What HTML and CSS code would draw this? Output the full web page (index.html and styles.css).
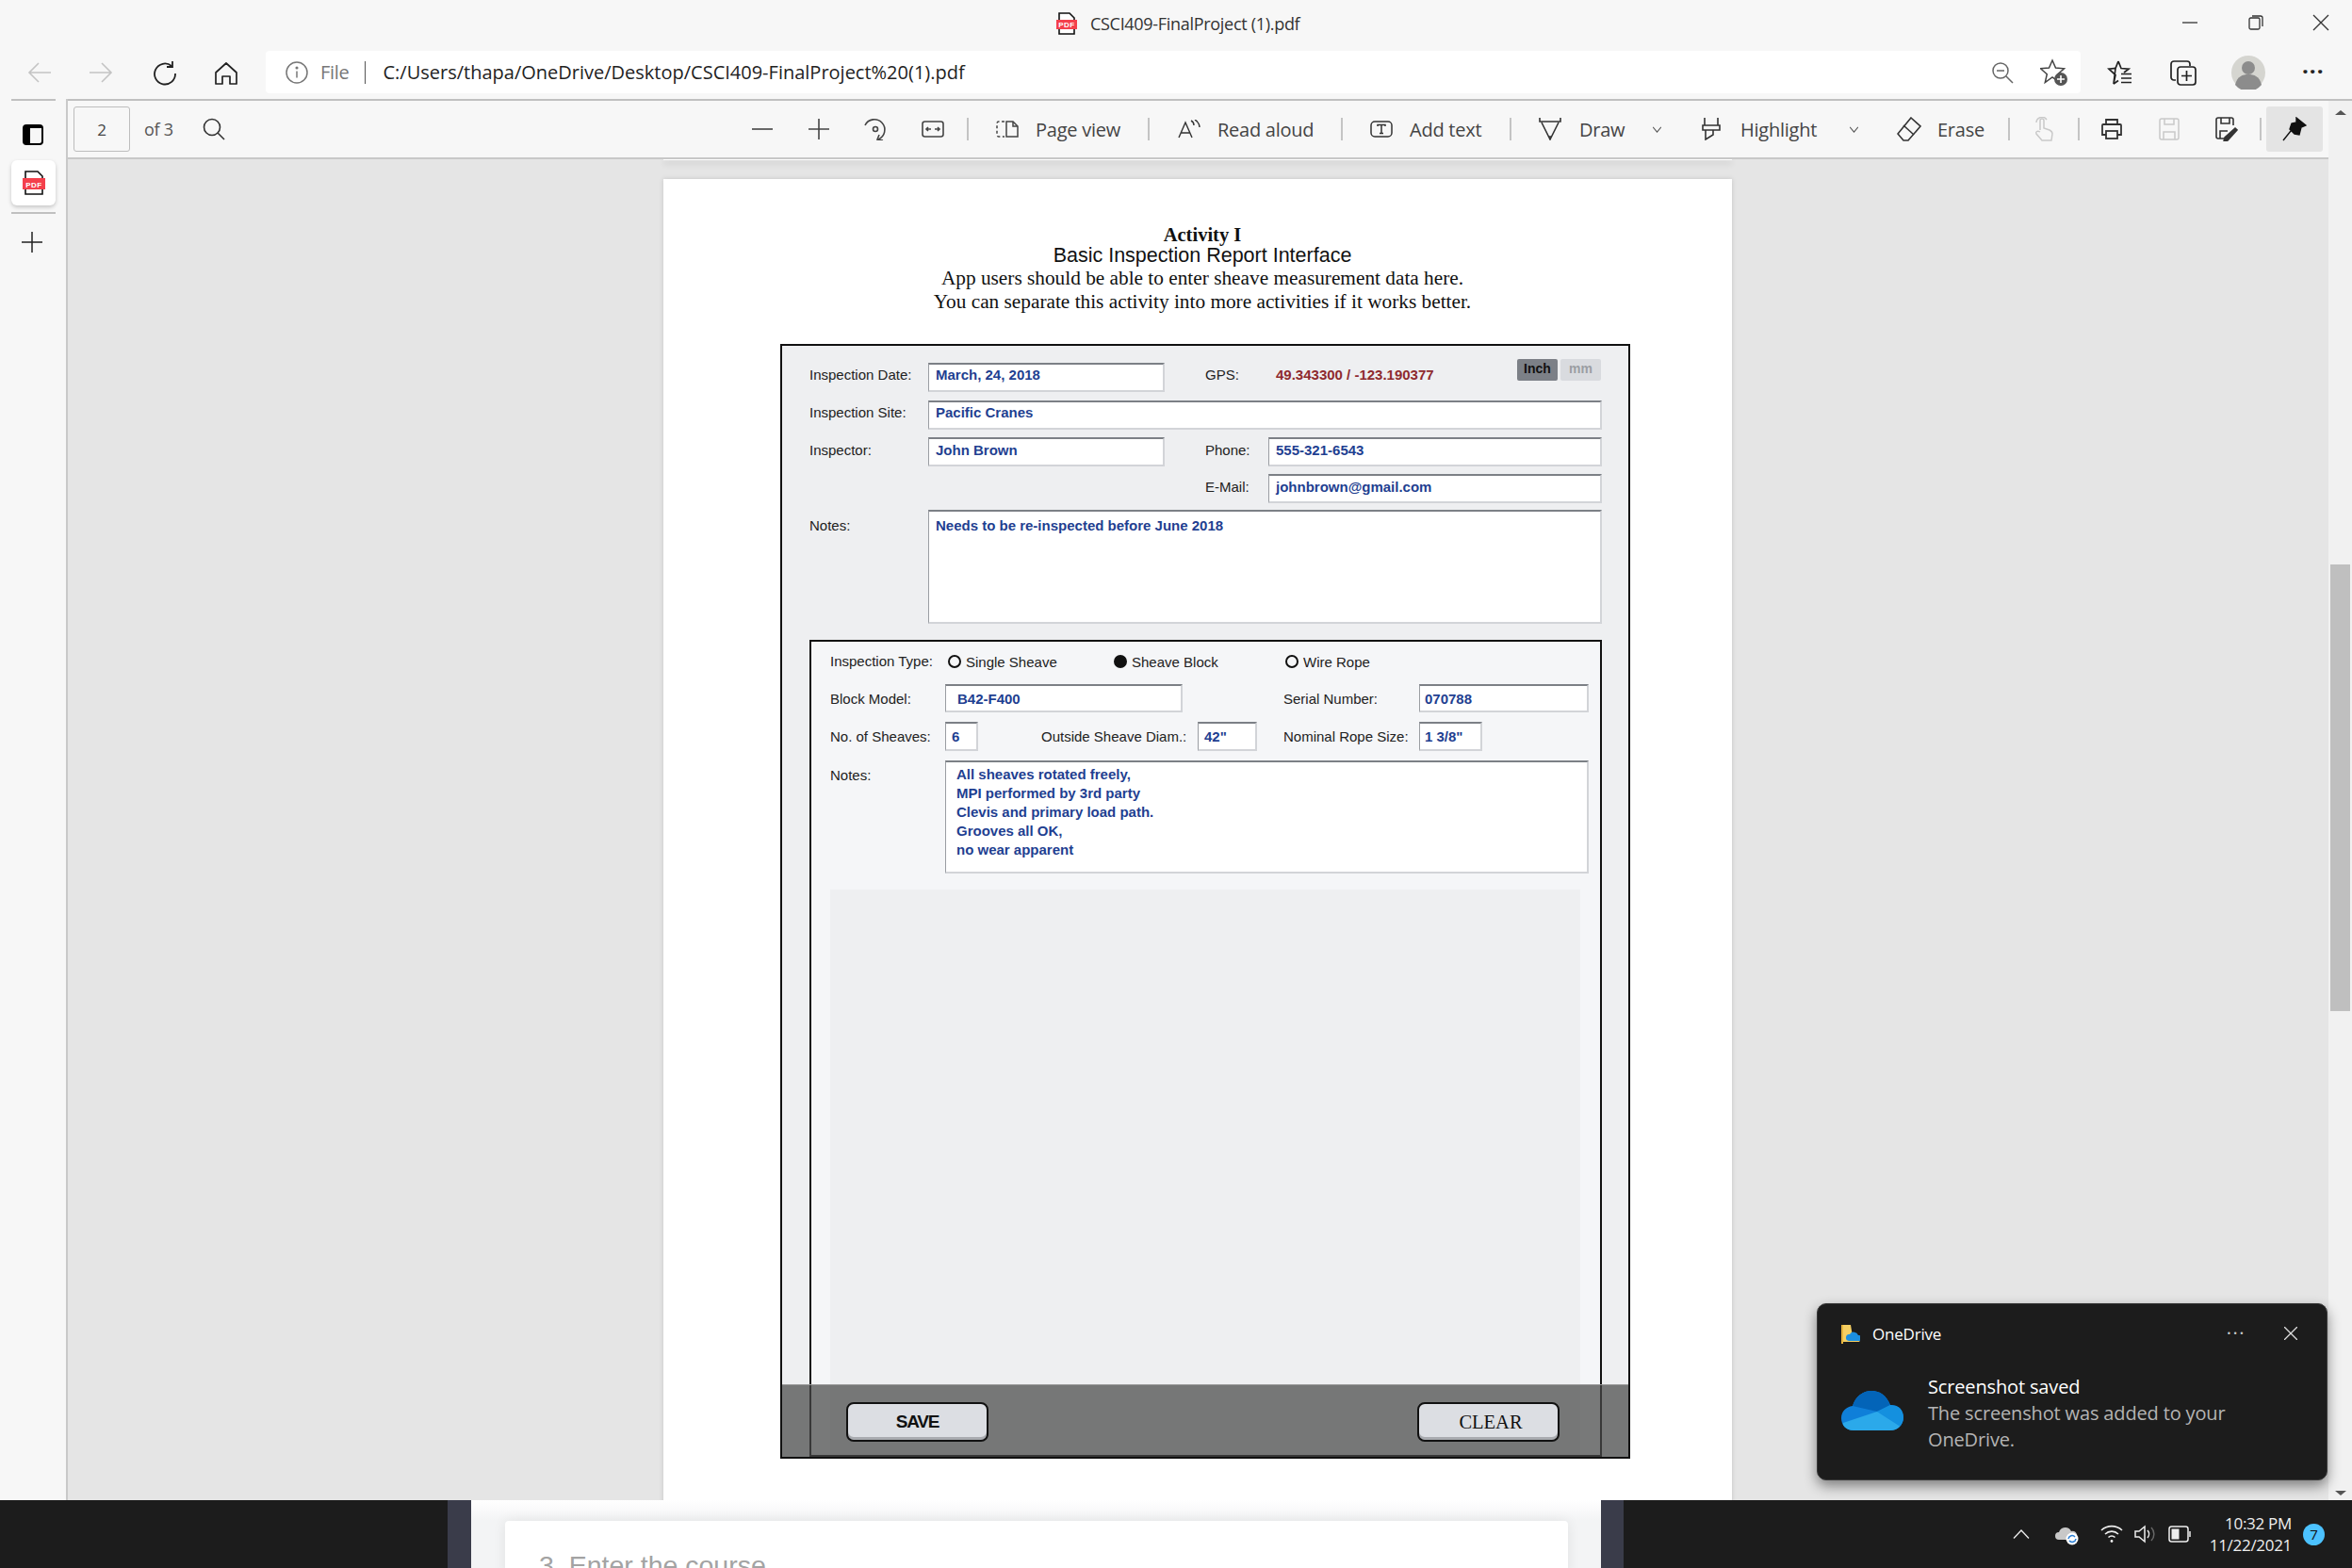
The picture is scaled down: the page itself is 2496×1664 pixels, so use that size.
FILE: index.html
```html
<!DOCTYPE html>
<html lang="en">
  <head>
    <meta charset="UTF-8" />
    <title>CSCI409-FinalProject (1).pdf</title>
    <link rel="stylesheet" href="styles.css">
  </head>
  <body>
    <!-- window title -->
    <div class="titlebar">
      <svg class="title-icon" width="24" height="24" viewBox="0 0 24 24">
        <path d="M4 1h11l5 5v17H4z" fill="#fff" stroke="#111" stroke-width="1.6"/>
        <rect x="1" y="8" width="22" height="10" fill="#f4404c"/>
        <text x="12" y="16" text-anchor="middle" class="pdf-mark">PDF</text>
      </svg>
      <span class="title-text">CSCI409-FinalProject (1).pdf</span>
      <div class="win-controls">
        <svg width="18" height="18" viewBox="0 0 18 18"><path d="M1 9h16" stroke="#333" stroke-width="1.3"/></svg>
        <svg width="18" height="18" viewBox="0 0 18 18" fill="none" stroke="#333" stroke-width="1.3"><rect x="2" y="4" width="11" height="12" rx="1.5"/><path d="M5 2h9a2 2 0 0 1 2 2v9"/></svg>
        <svg width="18" height="18" viewBox="0 0 18 18"><path d="M1 1l16 16M17 1L1 17" stroke="#333" stroke-width="1.3"/></svg>
      </div>
    </div>

    <!-- navigation row -->
    <div class="navbar">
      <svg class="nav-btn" width="26" height="24" viewBox="0 0 26 24" fill="none" stroke="#c4c4c4" stroke-width="1.6"><path d="M25 12H2M12 2L2 12l10 10"/></svg>
      <svg class="nav-btn" width="26" height="24" viewBox="0 0 26 24" fill="none" stroke="#c4c4c4" stroke-width="1.6"><path d="M1 12h23M14 2l10 10-10 10"/></svg>
      <svg class="nav-btn" width="26" height="26" viewBox="0 0 26 26" fill="none" stroke="#222" stroke-width="1.8"><path d="M20 5a11 11 0 1 0 4 8"/><path d="M21 0v6h-6"/></svg>
      <svg class="nav-btn" width="26" height="26" viewBox="0 0 26 26" fill="none" stroke="#222" stroke-width="1.7"><path d="M13 2l11 10v12h-7v-8H9v8H2V12z" stroke-linejoin="round"/></svg>
      <div class="address">
        <svg width="24" height="24" viewBox="0 0 24 24" fill="none" stroke="#777" stroke-width="1.5"><circle cx="12" cy="12" r="11"/><path d="M12 10.500v7"/><circle cx="12" cy="7" r=".8" fill="#777"/></svg>
        <span class="addr-file">File</span>
        <span class="addr-sep"></span>
        <span class="addr-url">C:/Users/thapa/OneDrive/Desktop/CSCI409-FinalProject%20(1).pdf</span>
        <div class="addr-right">
          <svg width="24" height="24" viewBox="0 0 24 24" fill="none" stroke="#666" stroke-width="1.5"><circle cx="10" cy="10" r="8"/><path d="M6 10h8M16 16l7 7"/></svg>
          <svg width="30" height="30" viewBox="0 0 30 30"><path d="M13 2l3.500 8 9 .8-6.800 5.900 2 8.800L13 20l-7.700 5.500 2-8.800L.5 10.800l9-.8z" fill="none" stroke="#444" stroke-width="1.5"/><circle cx="22" cy="22" r="7" fill="#555"/><path d="M22 18v8M18 22h8" stroke="#fff" stroke-width="1.6"/></svg>
        </div>
      </div>
      <svg class="nav-fav" width="28" height="28" viewBox="0 0 28 28" fill="none" stroke="#222" stroke-width="1.7"><path d="M12 2l3 7.500 8 .7-5 3.800M7 26l2-9.500-7-6.300 7-.7z"/><path d="M12 2L9 9.500"/><path d="M7 26l5-3.500M15 15.500h11M15 20h11M15 24.500h11"/></svg>
      <svg class="nav-coll" width="28" height="28" viewBox="0 0 28 28" fill="none" stroke="#222" stroke-width="1.7"><path d="M6 22H4a3 3 0 0 1-3-3V5a3 3 0 0 1 3-3h14a3 3 0 0 1 3 3v2"/><rect x="8" y="8" width="19" height="19" rx="3"/><path d="M17.500 12v11M12 17.500h11"/></svg>
      <svg class="nav-avatar" width="36" height="36" viewBox="0 0 36 36"><circle cx="18" cy="18" r="18" fill="#d5d5d0"/><circle cx="18" cy="13" r="7" fill="#8c8c8c"/><path d="M4 31c2-9 8-11 14-11s12 2 14 11a18 18 0 0 1-28 0z" fill="#8c8c8c"/></svg>
      <span class="nav-more">&middot;&middot;&middot;</span>
    </div>

    <div class="content">
      <!-- vertical tabs -->
      <aside class="sidebar">
        <div class="side-line"></div>
        <svg class="side-panel" width="22" height="22" viewBox="0 0 22 22"><rect x="1" y="1" width="20" height="20" rx="3" fill="none" stroke="#000" stroke-width="2"/><rect x="1" y="1" width="7" height="20" fill="#000"/><rect x="1" y="1" width="20" height="3" fill="#000"/></svg>
        <div class="side-tab">
          <svg width="24" height="26" viewBox="0 0 24 26">
            <path d="M3 1h13l5 5v19H3z" fill="#fff" stroke="#111" stroke-width="1.6"/>
            <rect x="0" y="8" width="24" height="12" fill="#f4404c"/>
            <text x="12" y="17.500" text-anchor="middle" class="pdf-mark">PDF</text>
          </svg>
        </div>
        <div class="side-line side-line-low"></div>
        <svg class="side-plus" width="22" height="22" viewBox="0 0 22 22"><path d="M11 0v22M0 11h22" stroke="#222" stroke-width="1.5"/></svg>
      </aside>

      <div class="workspace">
        <div class="workspace-main">
          <!-- pdf toolbar -->
          <div class="toolbar">
            <div class="page-num">2</div>
            <span class="tool-of">of 3</span>
            <svg width="24" height="24" viewBox="0 0 24 24" fill="none" stroke="#333" stroke-width="1.6"><circle cx="10" cy="10" r="8.500"/><path d="M16 16l7 7"/></svg>

            <svg width="22" height="22" viewBox="0 0 22 22"><path d="M0 11h22" stroke="#444" stroke-width="1.6"/></svg>
            <svg width="22" height="22" viewBox="0 0 22 22"><path d="M11 0v22M0 11h22" stroke="#444" stroke-width="1.6"/></svg>
            <svg width="24" height="24" viewBox="0 0 24 24" fill="none" stroke="#444" stroke-width="1.6"><path d="M1 8a11 11 0 1 1 14 15"/><circle cx="12" cy="12" r="2.500"/><path d="M16 18l-2 5 6 1"/></svg>
            <svg width="24" height="18" viewBox="0 0 24 18" fill="none" stroke="#444" stroke-width="1.6"><rect x="1" y="1" width="22" height="16" rx="2.500"/><path d="M10 9H5M7 7L5 9l2 2M14 9h5M17 7l2 2-2 2"/></svg>
            <span class="tool-sep"></span>
            <svg width="24" height="18" viewBox="0 0 24 18" fill="none" stroke="#444" stroke-width="1.5"><path d="M9 1H3a2 2 0 0 0-2 2v12a2 2 0 0 0 2 2h6" stroke-dasharray="3 2.500"/><path d="M11 1h7l5 5v11H11z"/><path d="M18 1v5h5"/></svg>
            <span class="tool-text">Page view</span>
            <span class="tool-sep"></span>
            <svg width="24" height="20" viewBox="0 0 24 20" fill="none" stroke="#333" stroke-width="1.4"><path d="M1 19L8 3l7 16M3.500 14h9"/><path d="M14 1c2 1 3 3 3 5M18 0c3 2 5 4 5 8"/></svg>
            <span class="tool-text">Read aloud</span>
            <span class="tool-sep"></span>
            <svg width="24" height="18" viewBox="0 0 24 18" fill="none" stroke="#333" stroke-width="1.5"><rect x="1" y="1" width="22" height="16" rx="4"/><path d="M8 6V4.500h8V6M12 4.500V13.500M10 13.500h4"/></svg>
            <span class="tool-text">Add text</span>
            <span class="tool-sep"></span>
            <svg width="24" height="24" viewBox="0 0 24 24" fill="none" stroke="#333" stroke-width="1.6"><path d="M1 0v4h22V0M3 5l7.500 15h3L21 5M10.500 20l1.500 3 1.500-3"/></svg>
            <span class="tool-text">Draw</span>
            <svg width="9" height="7" viewBox="0 0 10 8" fill="none" stroke="#555" stroke-width="1.2"><path d="M0 1l5 6 5-6"/></svg>
            <svg width="24" height="24" viewBox="0 0 24 24" fill="none" stroke="#333" stroke-width="1.6"><path d="M5 0v8h14V0M3 8h18v5H3zM6 13v10l8-5v-5"/></svg>
            <span class="tool-text tool-text-hl">Highlight</span>
            <svg width="9" height="7" viewBox="0 0 10 8" fill="none" stroke="#555" stroke-width="1.2"><path d="M0 1l5 6 5-6"/></svg>
            <svg width="26" height="26" viewBox="0 0 26 26" fill="none" stroke="#333" stroke-width="1.6"><path d="M15 1l10 9-13 15H7l-6-7z"/><path d="M7 9l11 10"/></svg>
            <span class="tool-text tool-text-hl">Erase</span>
            <span class="tool-sep"></span>
            <svg width="20" height="26" viewBox="0 0 20 26" fill="none" stroke="#c9c9c9" stroke-width="1.5"><path d="M6 14V4a2 2 0 0 1 4 0v8l6 2c2 1 3 2 3 4l-1 7H8l-6-7c-1-2 1-4 4-2"/><path d="M2 6a6 6 0 0 1 11-3"/></svg>
            <span class="tool-sep"></span>
            <svg width="24" height="24" viewBox="0 0 24 24" fill="none" stroke="#333" stroke-width="1.8"><path d="M6 7V2h12v5M6 18H2V8a1 1 0 0 1 1-1h18a1 1 0 0 1 1 1v10h-4"/><rect x="6" y="14" width="12" height="8"/></svg>
            <svg width="22" height="24" viewBox="0 0 22 24" fill="none" stroke="#c9c9c9" stroke-width="1.5"><rect x="1" y="1" width="20" height="22" rx="2"/><path d="M6 1v6h10V1M5 23v-8h12v8"/></svg>
            <svg width="24" height="26" viewBox="0 0 24 26" fill="none" stroke="#333" stroke-width="1.6"><path d="M9 23H3a2 2 0 0 1-2-2V3a2 2 0 0 1 2-2h14a2 2 0 0 1 2 2v6"/><path d="M6 1v6h9V1M5 23v-8h8"/><path d="M21 12l2 2-10 11-4 1 1-4z" fill="#333"/></svg>
            <span class="tool-sep"></span>
            <div class="pin-btn">
              <svg width="26" height="26" viewBox="0 0 26 26"><path d="M15 1l10 8-5 2-2 8-5-1-5-5 2-6 5-1zM9 15l-8 10" fill="#111" stroke="#111" stroke-width="1.4"/></svg>
            </div>
          </div>

          <!-- document area -->
          <div class="viewer">
            <div class="prev-page"></div>
            <div class="pdf-page">
              <div class="doc-head">
                <div class="head-activity">Activity I</div>
                <div class="head-title">Basic Inspection Report Interface</div>
                <div class="head-line head-line-a">App users should be able to enter sheave measurement data here.</div>
                <div class="head-line">You can separate this activity into more activities if it works better.</div>
              </div>

              <div class="report">
                <div class="report-grid">
                  <label class="lbl">Inspection Date:</label>
                  <div class="field field-high">March, 24, 2018</div>
                  <label class="lbl lbl-c3">GPS:</label>
                  <div class="gps-cell">
                    <span class="gps-val">49.343300 / -123.190377</span>
                    <div class="unit-toggle">
                      <span class="unit unit-on">Inch</span>
                      <span class="unit">mm</span>
                    </div>
                  </div>

                  <label class="lbl">Inspection Site:</label>
                  <div class="field field-wide field-high">Pacific Cranes</div>

                  <label class="lbl lbl-low">Inspector:</label>
                  <div class="field">John Brown</div>
                  <label class="lbl lbl-c3 lbl-low">Phone:</label>
                  <div class="field">555-321-6543</div>

                  <label class="lbl lbl-c3 lbl-low">E-Mail:</label>
                  <div class="field">johnbrown@gmail.com</div>

                  <label class="lbl lbl-notes">Notes:</label>
                  <div class="field field-wide field-notes">Needs to be re-inspected before June 2018</div>
                </div>

                <div class="sheave-box">
                  <div class="type-row">
                    <span class="lbl">Inspection Type:</span>
                    <span class="radio-opt"><i class="radio"></i>Single Sheave</span>
                    <span class="radio-opt"><i class="radio radio-on"></i>Sheave Block</span>
                    <span class="radio-opt"><i class="radio"></i>Wire Rope</span>
                  </div>

                  <div class="sheave-grid">
                    <label class="lbl lbl-tall">Block Model:</label>
                    <div class="field field-sm field-block">B42-F400</div>
                    <label class="lbl lbl-tall lbl-serial">Serial Number:</label>
                    <div class="field field-sm field-serial">070788</div>

                    <label class="lbl lbl-tall">No. of Sheaves:</label>
                    <div class="field field-sm">6</div>
                    <label class="lbl lbl-tall lbl-outside">Outside Sheave Diam.:</label>
                    <div class="field field-sm">42"</div>
                    <label class="lbl lbl-tall lbl-serial">Nominal Rope Size:</label>
                    <div class="field field-sm field-rope">1 3/8"</div>

                    <label class="lbl lbl-tall">Notes:</label>
                    <div class="field field-sheave-notes">All sheaves rotated freely,<br>MPI performed by 3rd party<br>Clevis and primary load path.<br>Grooves all OK,<br>no wear apparent</div>
                  </div>

                  <div class="sketch-area"></div>
                </div>

                <div class="report-bar">
                  <button class="bar-btn bar-save">SAVE</button>
                  <button class="bar-btn bar-clear">CLEAR</button>
                </div>
              </div>
            </div>
          </div>
        </div>

        <div class="scrollbar">
          <span class="arrow-up"></span>
          <div class="thumb"></div>
          <span class="arrow-down"></span>
        </div>
      </div>
    </div>

    <!-- taskbar with the window behind it -->
    <div class="taskbar">
      <div class="behind-strip"></div>
      <div class="behind-page">
        <div class="behind-card">3. Enter the course</div>
      </div>
      <div class="behind-strip behind-strip-r"></div>
      <div class="tray">
        <svg width="18" height="10" viewBox="0 0 18 10" fill="none" stroke="#eee" stroke-width="1.3"><path d="M1 9.500L9 1l8 8.500"/></svg>
        <svg width="26" height="24" viewBox="0 0 26 24"><path d="M4 18a4 4 0 0 1 0-8 7 7 0 0 1 13-1 5 5 0 0 1 4 9z" fill="#c8c8c8"/><circle cx="18" cy="17" r="6.500" fill="#fff"/><path d="M14 17a4 4 0 0 1 7-2M22 17a4 4 0 0 1-7 2" fill="none" stroke="#2a7fd5" stroke-width="1.6"/></svg>
        <svg width="24" height="20" viewBox="0 0 24 20" fill="none" stroke="#eee" stroke-width="1.6"><path d="M1 6a16 16 0 0 1 22 0M5 10a10 10 0 0 1 14 0M8.500 13.500a5 5 0 0 1 7 0"/><circle cx="12" cy="17.500" r="1.400" fill="#eee" stroke="none"/></svg>
        <svg width="24" height="20" viewBox="0 0 24 20" fill="none" stroke="#eee" stroke-width="1.5"><path d="M1 7v6h4l6 5V2L5 7z"/><path d="M14 6a6 6 0 0 1 0 8"/><path d="M18 3a10 10 0 0 1 0 14" stroke="#666"/></svg>
        <svg width="24" height="18" viewBox="0 0 24 18" fill="none" stroke="#eee" stroke-width="1.5"><rect x="1" y="1" width="20" height="16" rx="2.500"/><rect x="3.500" y="3.500" width="8" height="11" fill="#eee" stroke="none"/><path d="M23 6v6"/></svg>
        <div class="clock"><span>10:32 PM</span><span>11/22/2021</span></div>
        <span></span>
        <span class="notif-badge">7</span>
      </div>
    </div>

    <!-- onedrive toast -->
    <div class="toast">
      <div class="toast-head">
        <svg width="20" height="21" viewBox="0 0 20 21"><path d="M0 1h10l2 12 8 6H2z" fill="#f5cf63"/><path d="M0 1h2v20H0z" fill="#e7b43c"/><path d="M8 18a3.500 3.500 0 0 1 1-7 5 5 0 0 1 9 1 3 3 0 0 1 1 6z" fill="#1b8fe0"/></svg>
        <span class="toast-app">OneDrive</span>
        <span class="toast-dots">&middot;&middot;&middot;</span>
        <svg class="toast-x" width="14" height="14" viewBox="0 0 14 14"><path d="M0 0l14 14M14 0L0 14" stroke="#ddd" stroke-width="1.3"/></svg>
      </div>
      <div class="toast-body">
        <svg class="toast-cloud" width="66" height="42" viewBox="0 0 66 42">
          <defs><clipPath id="cloud"><path d="M13 42C5 42 0 36 0 29c0-7 5-12 12-13C15 6 23 0 32 0c9 0 16 5 20 15 8-1 14 5 14 13 0 8-6 14-14 14z"/></clipPath></defs>
          <g clip-path="url(#cloud)">
            <rect width="66" height="42" fill="#0f7fd9"/>
            <path d="M0 0h66L52 15 38 22 12 16z" fill="#0364b8"/>
            <path d="M38 22l14-7 14 3v22z" fill="#1490df"/>
            <path d="M38 22l28 18v2H0l2-8z" fill="#2ba9ea"/>
          </g>
        </svg>
        <div class="toast-text">
          <div class="toast-title">Screenshot saved</div>
          <div class="toast-msg">The screenshot was added to your<br>OneDrive.</div>
        </div>
      </div>
    </div>
  </body>
</html>
```

FILE: styles.css
```css
* {
  box-sizing: border-box;
}

body {
  margin: 0;
  width: 2496px;
  height: 1664px;
  overflow: hidden;
  position: relative;
  display: flex;
  flex-direction: column;
  background: #f7f7f7;
  font-family: "Open Sans", "Noto Sans", sans-serif;
  color: #333;
}

.pdf-mark {
  font-family: "Liberation Sans", sans-serif;
  font-size: 8px;
  font-weight: bold;
  letter-spacing: 0.5px;
  fill: #fff;
}

/* title bar */
.titlebar {
  height: 54px;
  flex: none;
  display: flex;
  align-items: center;
  padding-left: 1120px;
  padding-bottom: 4px;
  position: relative;
}

.title-text {
  margin-left: 13px;
  font-size: 18px;
  letter-spacing: -0.3px;
  color: #333;
}

.win-controls {
  position: absolute;
  left: 2315px;
  top: 15px;
  display: grid;
  grid-template-columns: 70px 69px 18px;
}

/* nav row */
.navbar {
  height: 51px;
  flex: none;
  display: grid;
  grid-template-columns: 65px 68px 65px 55px 1954px 67px 65px 77px 30px;
  padding-left: 29px;
  align-items: start;
}

.nav-btn {
  margin-top: 11px;
}

.address {
  width: 1926px;
  height: 45px;
  background: #fff;
  border-radius: 4px;
  display: flex;
  align-items: center;
  padding-left: 21px;
  padding-right: 12px;
}

.addr-file {
  margin-left: 13px;
  font-size: 20px;
  color: #777;
  letter-spacing: -0.3px;
}

.addr-sep {
  width: 1px;
  height: 24px;
  background: #555;
  margin-left: 17px;
}

.addr-url {
  margin-left: 18px;
  font-size: 20px;
  color: #222;
}

.addr-right {
  margin-left: auto;
  margin-right: 1px;
  display: flex;
  align-items: center;
  gap: 28px;
}

.nav-fav,
.nav-coll {
  margin-top: 9px;
}

.nav-avatar {
  margin-top: 5px;
}

.nav-more {
  margin-top: 6px;
  margin-left: -2px;
  font-size: 24px;
  line-height: 30px;
  letter-spacing: 1px;
  font-weight: bold;
  color: #222;
}

/* main row */
.content {
  height: 1487px;
  flex: none;
  display: flex;
}

.sidebar {
  width: 72px;
  flex: none;
  border-right: 2px solid #c9c9c9;
  display: flex;
  flex-direction: column;
  align-items: flex-start;
  padding-left: 12px;
}

.side-line {
  width: 47px;
  height: 2px;
  background: #c0c0c0;
}

.side-line-low {
  margin-top: 7px;
}

.side-panel {
  margin-top: 25px;
  margin-left: 12px;
}

.side-tab {
  margin-top: 16px;
  width: 47px;
  height: 48px;
  background: #fff;
  border-radius: 6px;
  box-shadow: 0 2px 4px rgba(0, 0, 0, 0.2);
  display: flex;
  align-items: center;
  justify-content: center;
}

.side-plus {
  margin-top: 19px;
  margin-left: 11px;
}

.workspace {
  flex: 1;
  display: flex;
  border-top: 2px solid #c0c0c0;
}

.workspace-main {
  width: 2399px;
  display: flex;
  flex-direction: column;
}

/* pdf toolbar, one track per item */
.toolbar {
  height: 62px;
  flex: none;
  border-bottom: 2px solid #c8c8c8;
  padding-left: 6px;
  display: grid;
  grid-template-columns:
    75px 62px 583px 60px 59px 61px 48px 31px 42px 119px 32px 42px 131px 31px
    42px 106px 31px 43px 78px 50px 44px 115px 50px 44px 74px 28px 46px 24px
    62px 60px 47px 7px 60px;
  align-items: center;
  justify-items: start;
}

.page-num {
  width: 60px;
  height: 48px;
  border: 1px solid #bdbdbd;
  border-radius: 3px;
  display: flex;
  align-items: center;
  justify-content: center;
  font-size: 17px;
  color: #444;
}

.tool-text {
  font-size: 20px;
  letter-spacing: -0.25px;
  color: #444;
}

.tool-text-hl {
  margin-left: -1px;
}

.tool-of {
  font-size: 18px;
  letter-spacing: -0.3px;
  color: #555;
}

.tool-sep {
  width: 2px;
  height: 24px;
  background: #c4c4c4;
}

.pin-btn {
  width: 60px;
  height: 48px;
  background: #e4e4e4;
  border-radius: 3px;
  display: flex;
  align-items: center;
  justify-content: center;
}

/* document */
.viewer {
  flex: 1;
  background: #e5e5e5;
  overflow: hidden;
}

.prev-page {
  width: 1134px;
  height: 1px;
  margin-left: 632px;
  background: #fff;
  box-shadow: 0 3px 6px rgba(0, 0, 0, 0.3);
}

.pdf-page {
  width: 1134px;
  height: 1420px;
  margin-top: 20px;
  margin-left: 632px;
  background: #fff;
  box-shadow: 0 0 5px rgba(0, 0, 0, 0.15);
  padding-top: 47px;
  padding-left: 124px;
}

.doc-head {
  width: 903px;
  padding-right: 7px;
  text-align: center;
  color: #111;
  font-family: "Liberation Serif", serif;
}

.head-activity {
  font-size: 20.5px;
  font-weight: bold;
  line-height: 24px;
}

.head-title {
  font-family: "Liberation Sans", sans-serif;
  font-size: 21.5px;
  line-height: 21px;
}

.head-line {
  font-size: 21.3px;
  line-height: 25px;
}

.head-line-a {
  margin-top: 1px;
}

.report {
  position: relative;
  width: 902px;
  height: 1183px;
  margin-top: 32px;
  border: 2px solid #111;
  background: #eeeff1;
  padding: 18px 28px 0 29px;
  display: flex;
  flex-direction: column;
  font-family: "Liberation Sans", sans-serif;
  font-size: 15px;
  color: #222;
}

.report-grid {
  display: grid;
  grid-template-columns: 126px 251px 43px 67px 354px;
  grid-template-rows: 32px 31px 31px 30px 121px;
  row-gap: 8px;
  width: 841px;
}

.lbl {
  line-height: 26px;
  white-space: nowrap;
}

.lbl-c3 {
  grid-column: 4;
}

.lbl-low {
  line-height: 28px;
}

.lbl-notes {
  line-height: 34px;
}

.field {
  background: #fff;
  border-top: 2px solid #7c8086;
  border-left: 1px solid #9a9da2;
  border-right: 2px solid #d2d4d8;
  border-bottom: 2px solid #d2d4d8;
  padding-left: 7px;
  color: #1f3f91;
  font-weight: bold;
  line-height: 24px;
  height: 31px;
  white-space: nowrap;
}

.field-high {
  line-height: 22px;
}

.field-wide {
  grid-column: 2 / 6;
}

.field-notes {
  height: 121px;
  padding-top: 3px;
}

.gps-cell {
  display: flex;
  align-items: flex-start;
  padding-left: 8px;
}

.gps-val {
  color: #8e2a2e;
  font-weight: bold;
  line-height: 26px;
}

.unit-toggle {
  margin-left: auto;
  margin-top: -4px;
  margin-right: 1px;
  display: flex;
  gap: 3px;
}

.unit {
  width: 43px;
  height: 23px;
  background: #d9dbdf;
  color: #9b9ea3;
  font-weight: bold;
  font-size: 14px;
  line-height: 21px;
  text-align: center;
  border-radius: 2px;
}

.unit-on {
  background: #7c8087;
  color: #111;
}

/* inner section */
.sheave-box {
  flex: 1;
  margin-top: 17px;
  border: 2px solid #111;
  background: #f5f6f8;
  padding: 0 20px;
  display: flex;
  flex-direction: column;
}

.type-row {
  display: grid;
  grid-template-columns: 125px 176px 182px 150px;
  height: 42px;
  margin-bottom: 3px;
  align-items: center;
}

.radio-opt {
  display: flex;
  align-items: center;
  gap: 5px;
}

.radio {
  width: 14px;
  height: 14px;
  border: 2px solid #111;
  border-radius: 50%;
}

.radio-on {
  background: #111;
}

.sheave-grid {
  display: grid;
  grid-template-columns: 122px 35px 67px 166px 63px 28px 144px 180px;
  grid-template-rows: 30px 31px 120px;
  row-gap: 10px;
}

.lbl-tall {
  line-height: 32px;
}

.field-sm {
  height: 100%;
  line-height: 28px;
  padding-left: 6px;
}

.field-block {
  grid-column: 2 / 5;
  width: 252px;
  padding-left: 12px;
}

.lbl-serial {
  grid-column: 7;
}

.field-serial {
  grid-column: 8;
}

.field-sm.field-serial {
  padding-left: 5px;
}

.lbl-outside {
  grid-column: 4;
}

.field-rope {
  width: 67px;
  padding-left: 5px;
}

.field-sheave-notes {
  grid-column: 2 / 9;
  height: 120px;
  padding-left: 11px;
  padding-top: 3px;
  line-height: 20px;
  white-space: normal;
}

.sketch-area {
  flex: 1;
  margin-top: 17px;
  width: 796px;
  background: #eeeff1;
}

.report-bar {
  position: absolute;
  left: 0;
  right: 0;
  bottom: 0;
  height: 77px;
  background: rgba(72, 72, 72, 0.72);
  border-top: 1px solid #999;
  padding: 18px 73px 0 68px;
  display: flex;
  justify-content: space-between;
  align-items: flex-start;
}

.bar-btn {
  width: 151px;
  height: 42px;
  background: #dcdee3;
  border: 2px solid #111;
  border-radius: 8px;
  box-shadow: inset 0 -3px 0 #a9abb0;
  color: #111;
  padding: 0;
}

.bar-save {
  font-family: "Liberation Sans", sans-serif;
  font-size: 19px;
  font-weight: bold;
  letter-spacing: -1.2px;
}

.bar-clear {
  padding-left: 5px;
  font-family: "Liberation Serif", serif;
  font-size: 20.5px;
}

/* scrollbar */
.scrollbar {
  width: 25px;
  background: #f1f1f1;
  display: flex;
  flex-direction: column;
  align-items: center;
  position: relative;
}

.arrow-up {
  margin-top: 10px;
  border-left: 6px solid transparent;
  border-right: 6px solid transparent;
  border-bottom: 5px solid #555;
}

.thumb {
  margin-top: 477px;
  width: 21px;
  height: 474px;
  background: #bfbfbf;
}

.arrow-down {
  position: absolute;
  bottom: 5px;
  border-left: 6px solid transparent;
  border-right: 6px solid transparent;
  border-top: 5px solid #555;
}

/* taskbar */
.taskbar {
  height: 72px;
  flex: none;
  background: #1c1c1c;
  display: flex;
  padding-left: 475px;
  overflow: hidden;
}

.behind-strip {
  width: 25px;
  flex: none;
  background: #3a3c4a;
}

.behind-strip-r {
  width: 24px;
}

.behind-page {
  width: 1199px;
  flex: none;
  background: linear-gradient(#fff, #f3f4f5 22px);
  padding: 22px 35px 0 36px;
}

.behind-card {
  height: 60px;
  background: #fff;
  border-radius: 4px 4px 0 0;
  box-shadow: 0 0 14px rgba(0, 0, 0, 0.08);
  padding: 30px 36px 0;
  font-family: "Liberation Sans", sans-serif;
  font-size: 28.5px;
  line-height: 34px;
  color: #a3a3a3;
  overflow: hidden;
}

.tray {
  flex: 1;
  display: grid;
  grid-template-columns: 45px 48px 36px 36px 24px 107px 12px 23px;
  padding-left: 413px;
  align-items: center;
  justify-items: start;
  color: #eee;
}

.clock {
  justify-self: end;
  display: flex;
  flex-direction: column;
  align-items: flex-end;
  font-size: 17px;
  line-height: 23px;
  letter-spacing: -0.3px;
  white-space: nowrap;
  color: #eee;
}

.notif-badge {
  width: 23px;
  height: 23px;
  border-radius: 50%;
  background: #4cc2ff;
  color: #111;
  font-size: 15px;
  line-height: 23px;
  text-align: center;
}

/* toast */
.toast {
  position: absolute;
  left: 1928px;
  top: 1383px;
  width: 542px;
  height: 188px;
  background: #1c1c1c;
  border-radius: 10px;
  border: 1px solid #3a3a3a;
  box-shadow: 0 6px 14px rgba(0, 0, 0, 0.45);
  padding: 20px 31px 0 25px;
  color: #fff;
}

.toast-head {
  display: flex;
  align-items: center;
  height: 22px;
}

.toast-app {
  margin-left: 13px;
  font-size: 17px;
  letter-spacing: -0.2px;
}

.toast-dots {
  margin-left: auto;
  font-size: 20px;
  line-height: 16px;
  letter-spacing: 1.5px;
  color: #ccc;
}

.toast-x {
  margin-left: 41px;
}

.toast-body {
  margin-top: 32px;
  display: flex;
  align-items: center;
}

.toast-cloud {
  margin-top: -6px;
}

.toast-text {
  margin-left: 26px;
}

.toast-title {
  font-size: 20px;
  line-height: 28px;
  letter-spacing: -0.15px;
}

.toast-msg {
  font-size: 20px;
  line-height: 28px;
  letter-spacing: -0.15px;
  color: #b4b4b4;
}
```
